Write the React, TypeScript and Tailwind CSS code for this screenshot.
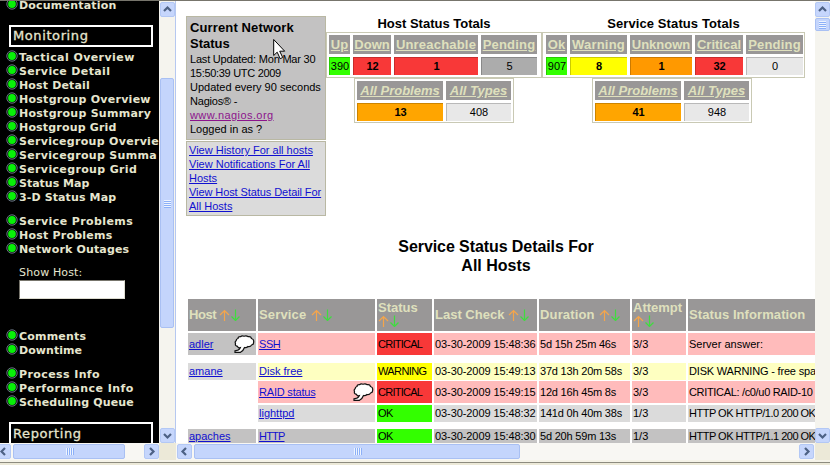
import React from "react";

const Bullet = () => (
  <svg width="12" height="12" viewBox="0 0 12 12" className="shrink-0">
    <circle cx="6" cy="6" r="5.200" fill="#050c08" stroke="#74808f" strokeWidth="0.900" />
    <circle cx="6" cy="6" r="3.900" fill="#08f008" />
  </svg>
);

const NavGroup = ({ items, className }: { items: [string, string][]; className: string }) => (
  <ul className={"pl-1.5 " + className}>
    {items.map(([t, tr]) => (
      <li key={t} className="flex h-[14px] items-start gap-px pt-px whitespace-nowrap">
        <Bullet />
        <span className={"mt-px text-[11px] leading-[14px] font-bold " + tr}>{t}</span>
      </li>
    ))}
  </ul>
);

const chev = { up: "M4 9l3.5-3.5L11 9", down: "M4 6l3.5 3.5L11 6", left: "M9 4L5.500 7.500 9 11", right: "M6 4l3.500 3.500L6 11" };
const Arrow = ({ dir, className = "" }: { dir: keyof typeof chev; className?: string }) => (
  <div className={"flex h-[15px] w-[15px] shrink-0 items-center justify-center rounded-xs border border-[#b3c8f5] bg-[#c6d6fc] " + className}>
    <svg width="15" height="15" viewBox="0 0 15 15" className="shrink-0">
      <path d={chev[dir]} fill="none" stroke="#4d6185" strokeWidth="2.2" />
    </svg>
  </div>
);

const HGrip = () => <div className="flex gap-px">{[0, 1, 2, 3].map((i) => <i key={i} className="h-[7px] w-px bg-[#eef4fe] shadow-[1px_0_0_#8cb0f8]" />)}</div>;
const VGrip = () => <div className="flex flex-col gap-px">{[0, 1, 2, 3].map((i) => <i key={i} className="h-px w-[7px] bg-[#eef4fe] shadow-[0_1px_0_#8cb0f8]" />)}</div>;

const Sort = () => (
  <svg width="22" height="12" viewBox="0 0 22 12" className="block shrink-0" fill="none" strokeWidth="1.2">
    <path d="M5.500 12V1.500M1 6l4.500-4.500L10 6" stroke="#f5a54a" />
    <path d="M16.500 0.500v11M12.500 7.500l4 4 4-4" stroke="#3fdc3f" />
  </svg>
);

const Bubble = () => (
  <svg width="21" height="19" viewBox="0 0 21 19" className="shrink-0">
    <path
      d="M4 3.500Q4 1.500 6.500 1.700Q8 .3 10 1.200Q12.500 .2 14 1.700Q17 1.200 17.500 3.500Q20.300 4.500 19.600 7Q20 9.500 17.600 10Q16.500 12 14 11.500Q12.500 13 10.500 12.500Q9.500 15.500 6.500 17.300L1 17.300V15.800Q5 15.500 6.300 12.700Q4 13.200 3.500 11.300Q.8 10.800 1.500 8.500Q.6 6.500 2.200 5.700Q2 4 4 3.500Z"
      fill="#fff" stroke="#111" strokeWidth="1.200"
    />
  </svg>
);

type Cell = { h: string; v: string; w: string; c: string; ht?: string; b?: boolean };
const Totals = ({ cells, className, italic }: { cells: Cell[]; className: string; italic?: boolean }) => (
  <div className={"flex gap-[3px] border border-[#c9c9b4] " + className}>
    {cells.map((c) => (
      <div key={c.h} className={"flex shrink-0 flex-col gap-[3px] text-center whitespace-nowrap " + c.w}>
        <div className={"h-[19px] bg-[#999797] text-[13px] leading-[19px] font-bold text-[#dfe0bd] underline " + (c.ht ?? "") + (italic ? " italic" : "")}>{c.h}</div>
        <div className={"h-[18px] border-t border-l border-black/20 text-[11px] leading-[17px] " + c.c + (c.b ? " font-bold" : "")}>{c.v}</div>
      </div>
    ))}
  </div>
);

const cols = "grid grid-cols-[68px_117px_55px_103px_91px_54px_128px] gap-x-[2px]";
const link = "text-[#1010d0] underline ";
type Row = { host?: string; hb?: string; hbub?: boolean; svc: string; svt?: string; sbub?: boolean; st: string; sc: string; bg: string; h: string; last: string; dur: string; att: string; info: string; it: string };
const rows: Row[] = [
  { host: "adler", hb: "bg-[#c3c2c2]", hbub: true, svc: "SSH", svt: "tracking-[-0.4px]", st: "CRITICAL", sc: "bg-[#f83838] tracking-[-0.75px]", bg: "bg-[#ffbbbb]", h: "h-[22px] mb-[8px]", last: "03-30-2009 15:48:36", dur: "5d 15h 25m 46s", att: "3/3", info: "Server answer:", it: "" },
  { host: "amane", hb: "bg-[#dbdbdb]", svc: "Disk free", st: "WARNING", sc: "bg-[#ffff00] tracking-[-0.6px]", bg: "bg-[#feffc1]", h: "h-[16px] mb-[2px]", last: "03-30-2009 15:49:13", dur: "37d 13h 20m 58s", att: "3/3", info: "DISK WARNING - free spa", it: "tracking-[-0.18px]" },
  { svc: "RAID status", svt: "tracking-[-0.2px]", sbub: true, st: "CRITICAL", sc: "bg-[#f83838] tracking-[-0.75px]", bg: "bg-[#ffbbbb]", h: "h-[22px] mb-[2px]", last: "03-30-2009 15:49:15", dur: "12d 16h 45m 8s", att: "3/3", info: "CRITICAL: /c0/u0 RAID-10", it: "tracking-[-0.33px]" },
  { svc: "lighttpd", st: "OK", sc: "bg-[#33ff00] tracking-[-0.5px]", bg: "bg-[#dbdbdb]", h: "h-[16px] mb-[8px]", last: "03-30-2009 15:48:32", dur: "141d 0h 40m 38s", att: "1/3", info: "HTTP OK HTTP/1.0 200 OK", it: "tracking-[-0.5px]" },
  { host: "apaches", hb: "bg-[#c3c2c2]", svc: "HTTP", svt: "tracking-[-0.8px]", st: "OK", sc: "bg-[#33ff00] tracking-[-0.5px]", bg: "bg-[#c3c2c2]", h: "h-[14px] *:pt-px leading-[13px]", last: "03-30-2009 15:48:30", dur: "5d 20h 59m 13s", att: "1/3", info: "HTTP OK HTTP/1.1 200 OK", it: "tracking-[-0.5px]" },
];

const Sidebar = () => (
  <div className="h-[442px] w-[159px] shrink-0 overflow-hidden bg-black font-['DejaVu_Sans',sans-serif] text-[#e6e6cf]">
    <NavGroup className="-mt-[4px]" items={[["Documentation", "tracking-[0.2px]"]]} />
    <div className="mt-[14px] ml-[9px] flex h-[22px] w-[144px] items-center border-2 border-white pl-[2px] text-[13px]">
      <span className="tracking-[0.6px] [-webkit-text-stroke:0.3px]">Monitoring</span>
    </div>
    <NavGroup
      className="mt-[2px]"
      items={[
        ["Tactical Overview", "tracking-[0.42px]"], ["Service Detail", "tracking-[0.35px]"], ["Host Detail", "tracking-[0.15px]"],
        ["Hostgroup Overview", "tracking-[0.27px]"], ["Hostgroup Summary", "tracking-[0.27px]"], ["Hostgroup Grid", "tracking-[0.18px]"],
        ["Servicegroup Overvie", "tracking-[0.3px]"], ["Servicegroup Summa", "tracking-[0.32px]"], ["Servicegroup Grid", "tracking-[0.35px]"],
        ["Status Map", "tracking-[0px]"], ["3-D Status Map", "tracking-[0.12px]"],
      ]}
    />
    <NavGroup className="mt-[10px]" items={[["Service Problems", "tracking-[0.4px]"], ["Host Problems", "tracking-[0.22px]"], ["Network Outages", "tracking-[0.15px]"]]} />
    <div className="mt-[11px] ml-[19px]">
      <div className="h-[14px] text-[11px] leading-[14px] tracking-[0.15px]">Show Host:</div>
      <div className="h-[19px] w-[106px] border border-[#dddcd0] border-t-[#77756c] border-l-[#77756c] bg-white" />
    </div>
    <NavGroup className="mt-[29px]" items={[["Comments", "tracking-[0.2px]"], ["Downtime", "tracking-[0.05px]"]]} />
    <NavGroup className="mt-[10px]" items={[["Process Info", "tracking-[0.4px]"], ["Performance Info", "tracking-[0.45px]"], ["Scheduling Queue", "tracking-[0.15px]"]]} />
    <div className="mt-[14px] ml-[9px] flex h-[21px] w-[144px] items-center border-2 border-b-0 border-white pl-[2px] text-[13px]">
      <span className="leading-[19px] tracking-[0.6px] [-webkit-text-stroke:0.3px]">Reporting</span>
    </div>
  </div>
);

const HostCells: Cell[] = [
  { h: "Up", v: "390", w: "w-[21px]", c: "bg-[#33ff00]" },
  { h: "Down", v: "12", w: "w-[38px]", c: "bg-[#f83838]", b: true },
  { h: "Unreachable", v: "1", w: "w-[84px]", ht: "tracking-[0.2px]", c: "bg-[#f83838]", b: true },
  { h: "Pending", v: "5", w: "w-[56px]", ht: "tracking-[0.2px]", c: "bg-[#acacac]" },
];
const SvcCells: Cell[] = [
  { h: "Ok", v: "907", w: "w-[21px]", c: "bg-[#33ff00]" },
  { h: "Warning", v: "8", w: "w-[57px]", ht: "tracking-[0.2px]", c: "bg-[#ffff00]", b: true },
  { h: "Unknown", v: "1", w: "w-[62px]", c: "bg-[#ff9900]", b: true },
  { h: "Critical", v: "32", w: "w-[48px]", c: "bg-[#f83838]", b: true },
  { h: "Pending", v: "0", w: "w-[57px]", ht: "tracking-[0.2px]", c: "bg-[#e8e8e8]" },
];
const all = (a: string, b: string): Cell[] => [
  { h: "All Problems", v: a, w: "w-[86px]", c: "bg-[#ffa500]", b: true },
  { h: "All Types", v: b, w: "w-[65px]", c: "bg-[#e8e8e8]" },
];

export default function App() {
  return (
    <div className="relative flex h-[465px] w-[830px] flex-col overflow-hidden bg-white font-['Liberation_Sans',Arial,sans-serif] text-[11px] text-black">
      <div className="h-px shrink-0 bg-[#77756c]" />
      <div className="flex h-[442px] shrink-0">
        <Sidebar />
        <div className="flex w-[17px] shrink-0 flex-col items-center border-r border-[#b6c8f0] bg-[#f5f4ee] pt-px">
          <Arrow dir="up" />
          <div className="mt-[61px] flex h-[250px] w-[14px] items-center justify-center rounded-xs border border-[#a9c0f3] bg-[#c4d5fc]"><VGrip /></div>
          <Arrow dir="down" className="mt-auto" />
        </div>
        <div className="h-[442px] w-[639px] shrink-0 overflow-hidden pl-[10px]">
          <div className="flex h-[236px] pt-[15px]">
            <div className="w-[140px] shrink-0">
              <div className="h-[124px] border border-[#b9b8a3] bg-[#c3c2c2] pt-[3px] pl-[3px] leading-[14px] whitespace-nowrap">
                <div className="text-[13px] leading-[16px] font-bold"><div className="tracking-[0.13px]">Current Network</div><div>Status</div></div>
                <div className="tracking-[-0.2px]">Last Updated: Mon Mar 30</div><div className="tracking-[-0.3px]">15:50:39 UTC 2009</div><div>Updated every 90 seconds</div><div className="tracking-[-0.2px]">Nagios® -</div>
                <div className="tracking-[0.42px] text-[#8c148c] underline">www.nagios.org</div><div>Logged in as ?</div>
              </div>
              <div className="mt-px h-[75px] border border-[#b9b8a3] bg-[#dbdbdb] pt-px pl-[2px] leading-[14px] whitespace-nowrap text-[#1010d0] underline">
                <div>View History For all hosts</div><div>View Notifications For All</div><div>Hosts</div><div className="tracking-[-0.08px]">View Host Status Detail For</div><div>All Hosts</div>
              </div>
            </div>
            <div className="flex w-[216px] shrink-0 flex-col items-center">
              <div className="h-[16px] text-[13px] leading-[16px] font-bold">Host Status Totals</div>
              <Totals cells={HostCells} className="h-[46px] w-[216px] pt-[2px] pl-[2px]" />
              <Totals italic cells={all("13", "408")} className="h-[45px] w-[160px] pt-[2px] pl-[2px]" />
            </div>
            <div className="flex w-[263px] shrink-0 flex-col items-center">
              <div className="h-[16px] text-[13px] leading-[16px] font-bold tracking-[0.1px]">Service Status Totals</div>
              <Totals cells={SvcCells} className="h-[46px] w-[263px] pt-[2px] pl-[3px]" />
              <Totals italic cells={all("41", "948")} className="mr-[3px] h-[45px] w-[160px] pt-[2px] pl-[2px]" />
            </div>
          </div>
          <div className="flex h-[62px] flex-col items-center pr-[9px] text-[16px] leading-[19px] font-bold">
            <div className="tracking-[-0.08px]">Service Status Details For</div><div>All Hosts</div>
          </div>
          <div className="pl-[2px]">
            <div className={cols + " mb-[2px] h-[32px] text-[13px] leading-[14px] font-bold whitespace-nowrap text-[#dfe0bd] *:flex *:items-center *:bg-[#999797] *:pl-px"}>
              <div><span className="w-[30px] tracking-[-0.4px]">Host</span><Sort /></div>
              <div><span className="w-[52px] tracking-[0.15px]">Service</span><Sort /></div>
              <div className="flex-wrap content-start pt-[2px]"><span className="w-full">Status</span><Sort /></div>
              <div><span className="w-[73px]">Last Check</span><Sort /></div>
              <div><span className="w-[59px] tracking-[0.15px]">Duration</span><Sort /></div>
              <div className="flex-wrap content-start pt-[2px]"><span className="w-full">Attempt</span><Sort /></div>
              <div className="tracking-[0.08px]">Status Information</div>
            </div>
            {rows.map((r) => (
              <div key={r.svc} className={cols + " whitespace-nowrap *:flex *:items-center *:pl-px " + r.h}>
                <div className={"justify-between pr-px " + (r.hb ?? "")}><span className={link}>{r.host}</span>{r.hbub && <Bubble />}</div>
                <div className={"justify-between pr-px " + r.bg}><span className={link + (r.svt ?? "")}>{r.svc}</span>{r.sbub && <Bubble />}</div>
                <div className={r.sc}>{r.st}</div>
                <div className={"tracking-[-0.08px] " + r.bg}>{r.last}</div>
                <div className={"tracking-[-0.2px] " + r.bg}>{r.dur}</div>
                <div className={r.bg}>{r.att}</div>
                <div className={r.bg + " " + r.it}>{r.info}</div>
              </div>
            ))}
          </div>
        </div>
        <div className="flex w-[15px] shrink-0 flex-col bg-[#f5f4ee] pt-px">
          <Arrow dir="up" />
          <div className="mt-px flex h-[13px] w-[15px] items-center justify-center rounded-xs border border-[#a9c0f3] bg-[#c4d5fc]"><VGrip /></div>
          <Arrow dir="down" className="mt-auto" />
        </div>
      </div>
      <div className="flex h-[17px] shrink-0 items-center bg-[#ece9d8]">
        <div className="flex h-full w-[159px] items-center bg-[#f8f7f3]">
          <Arrow dir="left" className="-ml-[4px]" />
          <div className="ml-[2px] flex h-[15px] w-[112px] items-center justify-center rounded-xs border border-[#a9c0f3] bg-[#c4d5fc]"><HGrip /></div>
          <Arrow dir="right" className="ml-auto" />
        </div>
        <div className="h-full w-[17px]" />
        <div className="flex h-full w-[639px] items-center bg-[#f8f7f3] px-px">
          <Arrow dir="left" />
          <div className="ml-[2px] flex h-[15px] w-[326px] items-center justify-center rounded-xs border border-[#a9c0f3] bg-[#c4d5fc]"><HGrip /></div>
          <Arrow dir="right" className="ml-auto" />
        </div>
      </div>
      <div className="flex-1 border-t-2 border-[#f5f3e8] bg-[#ece9d8]"><div className="h-px bg-[#8d8b7f]" /></div>
      <svg width="14" height="22" viewBox="0 0 14 22" className="absolute top-[38px] left-[273px]">
        <path d="M.7 1.500v16l3.500-3.300 3 6.500 2.500-1.200-3-6.300h5z" fill="#fff" stroke="#000" strokeWidth="1" />
      </svg>
    </div>
  );
}
